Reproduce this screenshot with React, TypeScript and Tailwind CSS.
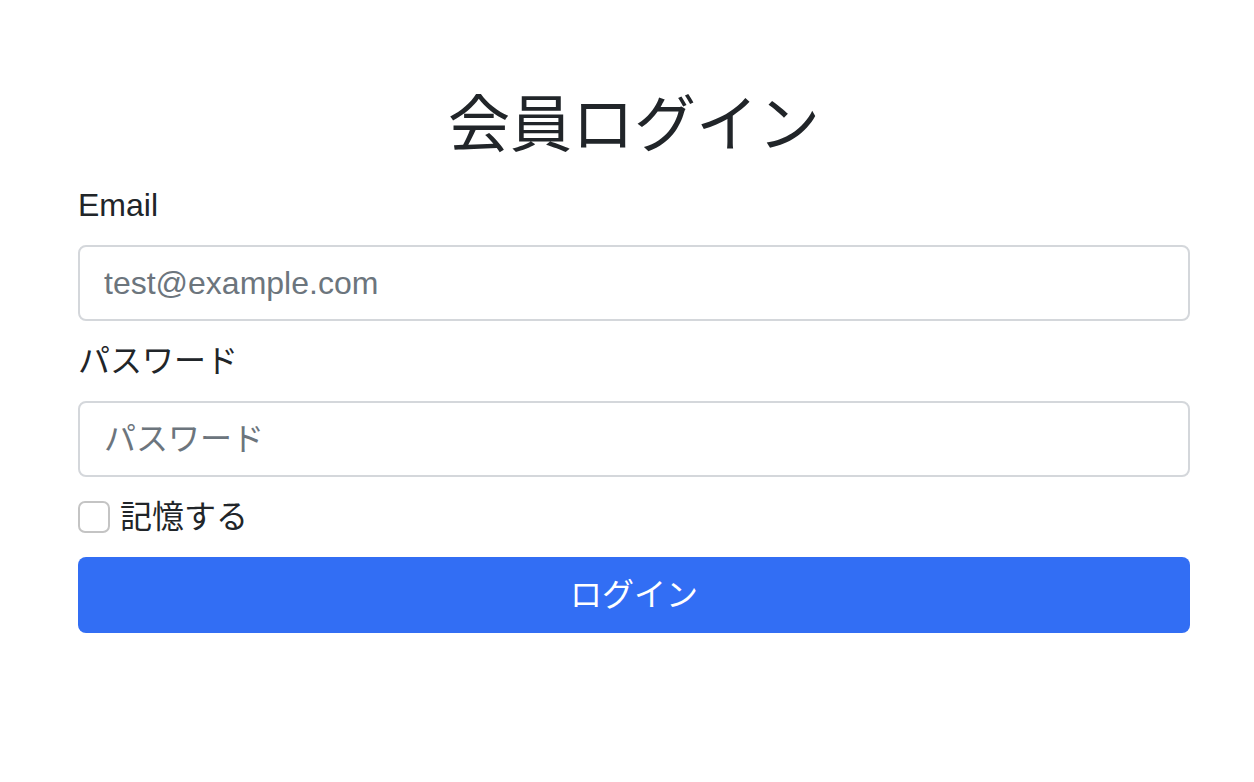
export default function App() {
  return (
    <div className="min-h-screen bg-white text-[#212529] [font-family:'Liberation_Sans','Noto_Sans_CJK_JP',sans-serif]">
      <form className="ml-[78px] mr-[64px] flex flex-col pt-[90px]">
        <h1 className="mb-[19px] text-center text-[62px] font-normal leading-[72px]">
          会員ログイン
        </h1>

        <label className="mb-4 text-[32px] leading-[48px]">Email</label>
        <input
          type="email"
          placeholder="test@example.com"
          className="mb-4 h-[76px] rounded-[8px] border-2 border-[#d4d7db] px-6 text-[32px] outline-none placeholder:text-[#6c757d]"
        />

        <label className="mb-4 text-[32px] leading-[48px]">パスワード</label>
        <input
          type="password"
          placeholder="パスワード"
          className="mb-4 h-[76px] rounded-[8px] border-2 border-[#d4d7db] px-6 text-[32px] outline-none placeholder:text-[#6c757d]"
        />

        <label className="mb-4 flex h-[48px] items-center gap-[10px] text-[32px]">
          <span className="h-[32px] w-[32px] rounded-[7px] border-2 border-[#c4c4c4] bg-white" />
          記憶する
        </label>

        <button
          type="button"
          className="h-[76px] rounded-[8px] bg-[#326ef4] text-[32px] text-white"
        >
          ログイン
        </button>
      </form>
    </div>
  );
}
